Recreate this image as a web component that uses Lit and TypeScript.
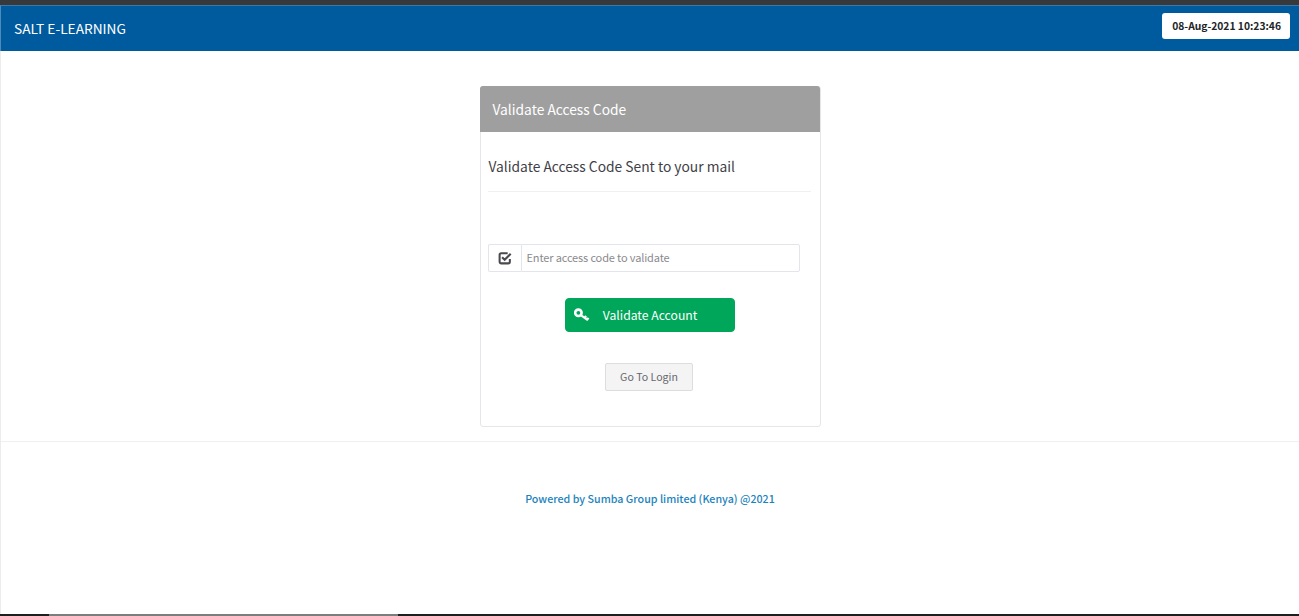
import { LitElement, html, css } from "lit";
import { customElement } from "lit/decorators.js";

@customElement("app-root")
export class AppRoot extends LitElement {
  static styles = css`
    :host {
      display: flex;
      flex-direction: column;
      height: 616px;
      overflow: hidden;
      background: #fff;
      font-family: "Noto Sans CJK JP", "Source Sans Pro", "Noto Sans", sans-serif;
      color: #3b3b44;
    }
    .topstrip { height: 5px; background: #38393b; flex: none; }
    .header {
      flex: none;
      height: 46px;
      box-sizing: border-box;
      background: #005a9e;
      border-top: 1px solid #3a78ad;
      border-left: 1px solid #4d8bbb;
      display: flex;
      align-items: center;
      justify-content: space-between;
      padding: 0 9px 0 13px;
      color: #fff;
    }
    .brand { font-size: 13.7px; line-height: 20px; margin-bottom: 1px; }
    .clock {
      background: #fff;
      color: #212529;
      font-size: 10.3px;
      font-weight: 700;
      line-height: 14px;
      padding: 6px 9px;
      width: 128px;
      box-sizing: border-box;
      white-space: nowrap;
      text-align: right;
      border-radius: 3px;
      margin-bottom: 5px;
    }
    .main {
      flex: 1;
      border-left: 1px solid #ececec;
      display: flex;
      flex-direction: column;
      align-items: center;
    }
    .card {
      margin-top: 35px;
      margin-bottom: 1px;
      width: 341px;
      height: 341px;
      box-sizing: border-box;
      border: 1px solid #e6e6ea;
      border-radius: 3px;
      display: flex;
      flex-direction: column;
    }
    .card-head {
      height: 46px;
      margin: -1px 0 0 -1px;
      background: #9f9f9f;
      color: #fff;
      font-size: 13.8px;
      line-height: 46px;
      padding-left: 13px;
      border-radius: 3px 3px 0 0;
    }
    .card-body { padding: 0 9px 0 7px; display: flex; flex-direction: column; }
    .sub {
      font-size: 13.8px;
      line-height: 20px;
      padding: 24px 0 15px 1px;
      border-bottom: 1px solid #f0f0f2;
      color: #3f3f48;
    }
    .group { display: flex; margin-top: 52px; width: 312px; height: 28px; }
    .addon {
      width: 33px;
      box-sizing: border-box;
      border: 1px solid #e4e4ec;
      border-right: none;
      border-radius: 2px 0 0 2px;
      display: flex;
      align-items: center;
      justify-content: center;
    }
    .input {
      flex: 1;
      box-sizing: border-box;
      border: 1px solid #e4e4ec;
      border-radius: 0 2px 2px 0;
      padding: 0 4px 2px 5px;
      font: inherit;
      font-size: 11px;
      letter-spacing: -0.14px;
      color: #495057;
      outline: none;
    }
    .input::placeholder { color: #8a8a8e; opacity: 1; }
    .validate {
      align-self: center;
      margin: 26px 0 0 2px;
      width: 170.5px;
      height: 34px;
      box-sizing: border-box;
      background: #00a65a;
      border: 1px solid #00a65a;
      border-radius: 4px;
      color: #fff;
      font: inherit;
      font-size: 12.2px;
      line-height: 20px;
      display: flex;
      align-items: center;
      padding: 0 0 0 8px;
      gap: 13px;
    }
    .login {
      align-self: center;
      margin: 31px 0 0 -1px;
      width: 88px;
      height: 28px;
      box-sizing: border-box;
      background: #f4f4f4;
      border: 1px solid #dddde0;
      border-radius: 2px;
      color: #66666c;
      font: inherit;
      font-size: 10.6px;
      line-height: 26px;
      padding: 0 0 0 1px;
    }
    .rule { align-self: stretch; margin-top: 13px; border-top: 1px solid #f0f0f0; }
    .footer {
      margin-top: 47px;
      color: #1c83bd;
      font-size: 10.7px;
      font-weight: 500;
      line-height: 20px;
    }
    .bottomstrip {
      flex: none;
      height: 2px;
      display: flex;
      background: #1f1f1f;
    }
    .bottomstrip i { display: block; margin-left: 49px; width: 349px; background: #7d7d7d; }
  `;

  render() {
    return html`
      <div class="topstrip"></div>
      <header class="header">
        <div class="brand">SALT E-LEARNING</div>
        <div class="clock">08-Aug-2021 10:23:46</div>
      </header>
      <main class="main">
        <section class="card">
          <div class="card-head">Validate Access Code</div>
          <div class="card-body">
            <div class="sub">Validate Access Code Sent to your mail</div>
            <div class="group">
              <span class="addon">
                <svg width="14" height="14" viewBox="0 0 13 13" fill="none" stroke="#4a4a4e" stroke-width="1.9">
                  <path d="M11 7.5V10a1.5 1.5 0 0 1-1.5 1.5H3A1.5 1.5 0 0 1 1.5 10V3.5A1.5 1.5 0 0 1 3 2h6"/>
                  <path d="M3.8 5.8l2.4 2.4 5.6-5.6" stroke-width="2"/>
                </svg>
              </span>
              <input class="input" placeholder="Enter access code to validate" />
            </div>
            <button class="validate">
              <svg width="16" height="15" viewBox="0 0 16 15" fill="none" stroke="#fff">
                <circle cx="4.4" cy="4.8" r="3.2" stroke-width="2.6"/>
                <path d="M6.8 7.2l7 5M10.6 10l1.5-2M13 11.8l1.5-2" stroke-width="2.2"/>
              </svg>
              <span>Validate Account</span>
            </button>
            <button class="login">Go To Login</button>
          </div>
        </section>
        <div class="rule"></div>
        <div class="footer">Powered by Sumba Group limited (Kenya) @2021</div>
      </main>
      <div class="bottomstrip"><i></i></div>
    `;
  }
}
